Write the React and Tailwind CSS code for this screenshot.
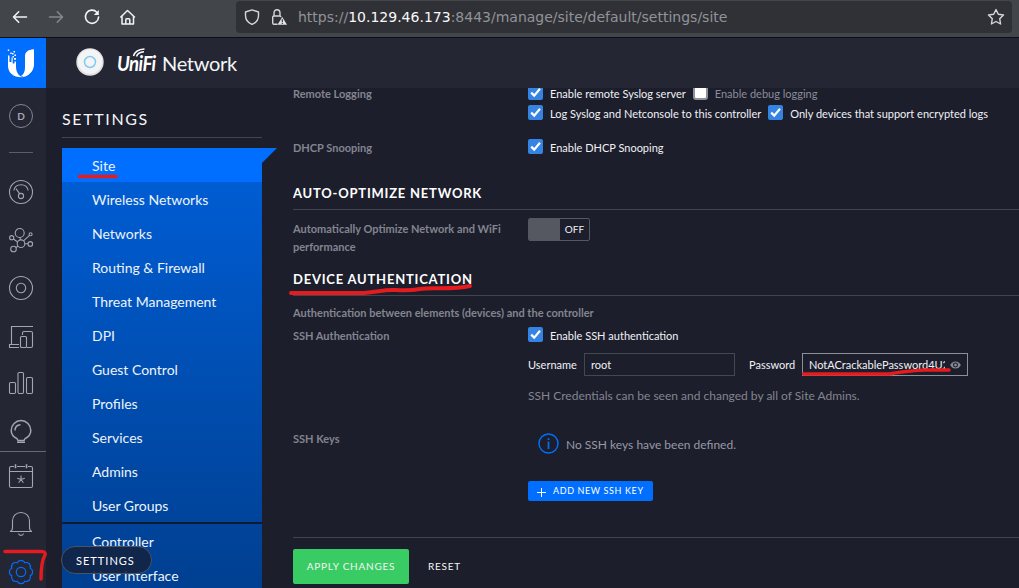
import React from "react";

function Check({ on = true }) {
  return on ? (
    <svg className="size-[15px] shrink-0" viewBox="0 0 15 15">
      <rect width="15" height="15" rx="2" fill="#3584e4" />
      <path d="M3.2 7.6 6.2 10.6 12 3.7" fill="none" stroke="#fff" strokeWidth="2.2" />
    </svg>
  ) : (
    <span className="size-[15px] shrink-0 rounded-[3px] border-2 border-[#8f8f9d] bg-white" />
  );
}

function Option({ on = true, children, className = "" }) {
  return (
    <label className={"flex items-start gap-[7px] " + className}>
      <Check on={on} />
      <span className={"mt-px whitespace-nowrap leading-4 " + (on ? "text-[#f0f1f4]" : "text-[#8b8d98]")}>{children}</span>
    </label>
  );
}

function Heading({ children }) {
  return (
    <h2 className="h-[26px] shrink-0 border-b border-[#42454f] text-[13px] font-bold leading-[18px] tracking-[0.78px] text-white">
      {children}
    </h2>
  );
}

function Label({ children }) {
  return <div className="w-[235px] shrink-0 pr-5 font-bold leading-[18px] text-[#83858f]">{children}</div>;
}

function Glyph({ children, blue, className = "" }) {
  return (
    <svg
      className={"size-6 shrink-0 overflow-visible " + className}
      viewBox="0 0 24 24"
      fill="none"
      stroke={blue ? "#006fff" : "#a3a5b0"}
      strokeWidth="1.1"
    >
      {children}
    </svg>
  );
}

function BrowserBar() {
  return (
    <div className="flex h-[38px] shrink-0 items-start border-b border-[#0d0d12] bg-[#42454a]">
      <div className="flex w-[236px] gap-3 pl-2 pt-[5px]">
        <svg className="size-6" viewBox="0 0 24 24" fill="none" stroke="#f3f3f4" strokeWidth="1.6" strokeLinecap="round" strokeLinejoin="round">
          <path d="M18.5 12H5.5M10.7 6.8 5.5 12l5.2 5.2" />
        </svg>
        <svg className="size-6" viewBox="0 0 24 24" fill="none" stroke="#85878b" strokeWidth="1.6" strokeLinecap="round" strokeLinejoin="round">
          <path d="M5.5 12h13M13.3 6.8l5.2 5.2-5.2 5.2" />
        </svg>
        <svg className="size-6" viewBox="0 0 24 24" fill="none" stroke="#f3f3f4" strokeWidth="1.6" strokeLinecap="round">
          <path d="M16.800 7.200A6.600 6.600 0 1 0 18.600 12" />
          <path d="M18.800 5v5h-5z" fill="#f3f3f4" stroke="none" />
        </svg>
        <svg className="size-6" viewBox="0 0 24 24" fill="none" stroke="#f3f3f4" strokeWidth="1.5" strokeLinecap="round" strokeLinejoin="round">
          <path d="M4.800 12 11.500 5.500 18.500 12M6 11v8h11.500v-8M9.800 19v-4.200q0-1 1-1h2q1 0 1 1V19" />
        </svg>
      </div>
      <div className="mt-px flex h-8 w-[776px] items-center rounded-[4px] bg-[#303136] pl-2">
        <svg className="size-4" viewBox="0 0 16 16" fill="none" stroke="#d6d6d8" strokeWidth="1.4" strokeLinejoin="round">
          <path d="M8 .9 14.500 3v3.400C14.500 10.500 11.500 13.900 8 15.400 4.500 13.900 1.500 10.500 1.500 6.400V3Z" />
        </svg>
        <svg className="ml-[11px] size-4" viewBox="0 0 16 16" fill="none" stroke="#d6d6d8" strokeWidth="1.4">
          <path d="M6.500 15.300H3Q1.700 15.300 1.700 14V8.200Q1.700 7 3 7H8.500Q10 7 10 8.300M3 7V4.200Q3 .8 6 .8T9 4.200V7" />
          <path d="M11.300 8 16 15.800H6.500Z" fill="#e2e2e4" stroke="none" />
          <path d="M11.300 10.300v3M11.300 14v1" stroke="#303136" strokeWidth="1.100" />
        </svg>
        <span className="ml-[11px] w-[689px] shrink-0 font-['DejaVu_Sans'] text-[14px] leading-8 text-[#929398]">
          https://<span className="text-[#f9f9fa]">10.129.46.173</span>:8443/manage/site/default/settings/site
        </span>
        <svg className="size-[18px] shrink-0" viewBox="0 0 18 18" fill="none" stroke="#d6d6d8" strokeWidth="1.4" strokeLinejoin="round">
          <path d="M9 1.600 11.300 6.300 16.500 7 12.700 10.700 13.600 16 9 13.500 4.400 16 5.300 10.700 1.500 7 6.700 6.300Z" />
        </svg>
      </div>
    </div>
  );
}

function Rail() {
  return (
    <aside className="flex w-[46px] shrink-0 flex-col items-center bg-[#242634]">
      <div className="flex h-[50px] w-[46px] shrink-0 items-center bg-[#006fff] pl-[7px]">
        <svg className="h-[30px] w-[27px]" viewBox="0 0 27 30" fill="#fff">
          <path d="M27 1.200C20.500 1.700 18 4 18 8.500V19C18 23 17 26.500 13.500 28.300 20.500 28.600 26.500 24.500 27 17Z" />
          <path d="M9 13.500V18.500C9 23.500 11 27.500 15.500 29.200 6.500 29.500 1 25 1 17.500V7.500h1.500V14H4.500V9.500h1.200V15.500H7.500v-2Z" />
          <path d="M26.200 20.500Q22.500 28.500 14.800 29.200 18 26.300 21 25Z" />
          <path d="M.8 1.500h1.400v1.400H.8zM5 5h1.500v1.500H5zM6.500 3H8v1.500H6.500zM3.300 4.500h1.400V6H3.300zM7.300 6.500H9V8H7.300zM5.500 8h1.500v1.500H5.500zM7 10h2v1.800H7z" />
        </svg>
      </div>
      <div className="ml-[9px] mt-4 flex size-6 shrink-0 items-center justify-center self-start rounded-full border border-[#83858f] pt-px text-[10px] font-bold text-[#a5a7b1]">D</div>
      <div className="ml-[9px] mt-6 h-px w-6 shrink-0 self-start bg-[#5c5e69]" />
      <div className="ml-[9px] mt-[27px] flex flex-1 flex-col self-start">
        <Glyph>
          <circle cx="12" cy="12" r="11.500" />
          <path d="M4.800 10.500C5.500 7 8.500 4.700 12 4.700s6.500 2.300 7.200 5.800M7 8.700 10.600 13.600" />
          <circle cx="12" cy="16" r="2.600" />
        </Glyph>
        <Glyph className="mt-6">
          <circle cx="10.700" cy="5" r="4.500" />
          <circle cx="12" cy="15.700" r="3.800" />
          <circle cx="2.700" cy="9.700" r="2.100" />
          <circle cx="21.300" cy="15.900" r="2.300" />
          <circle cx="4.500" cy="21" r="2.800" />
          <circle cx="21.600" cy="6.300" r="1.500" />
          <path d="m11 9.500.5 2.400M4.400 11l4.300 3M15.800 15.700H19M9.200 18.200l-2.500 1.200M14.500 12.800l6-5.500" />
        </Glyph>
        <Glyph className="mt-6">
          <circle cx="12" cy="12" r="11.500" />
          <circle cx="12" cy="12" r="4.700" />
        </Glyph>
        <Glyph className="mt-6">
          <path d="M24 2.500H2.500v18M10 20.500H.5v3H10M13.500 11V9q0-1.500 1.500-1.500h7q1.500 0 1.500 1.500v13q0 1.500-1.500 1.500h-4" />
          <rect x="11.500" y="12.500" width="6" height="11" rx="1" />
        </Glyph>
        <Glyph className="mt-6">
          <rect x=".5" y="10.500" width="6" height="11" rx="1.200" />
          <rect x="9" y=".5" width="5.500" height="21" rx="1.200" />
          <rect x="17.500" y="5.500" width="6" height="16" rx="1.200" />
        </Glyph>
        <Glyph className="mt-6">
          <path strokeWidth="1.500" d="M8 18.700C4 16.500 2.200 14 2.200 10.400a9.800 9.800 0 0 1 19.600 0c0 3.600-1.800 6.100-5.800 8.300l-1 1.800H9Z" />
          <path strokeWidth="1.500" d="M8 22.300h8M6 10.500C6 7 8 4.900 11.500 4.700" />
        </Glyph>
      </div>
      <div className="h-[137px] w-full shrink-0 border-t border-[#666873] pl-[9px] pt-3">
        <Glyph>
          <path d="M5 2.500H2Q.5 2.500.5 4v18q0 1.500 1.500 1.500h20q1.500 0 1.500-1.500V4q0-1.500-1.500-1.500h-3M8 2.500h8M.5 7.500h23" />
          <path strokeWidth="1.600" d="M6.500.2v4M17.500.2v4" />
          <path d="M12 15.500v-4M12 15.500l3.800-1.200M12 15.500l2.400 3.300M12 15.500l-2.400 3.300M12 15.500l-3.800-1.200" />
        </Glyph>
        <Glyph className="mt-6">
          <path d="M1 19.500q2.500-.5 2.500-4V9C3.500 4 7 .5 12 .5S20.500 4 20.500 9v6.500q0 3.500 2.500 4ZM9.500 21.500C10 24 14 24 14.500 21.500" />
        </Glyph>
        <Glyph blue className="mt-6">
          <path
            strokeWidth="1.200"
            d="M8.170 2.760A4.270 4.270 0 0 1 15.830 2.760A4.270 4.270 0 0 1 21.240 8.170A4.270 4.270 0 0 1 21.240 15.830A4.270 4.270 0 0 1 15.830 21.240A4.270 4.270 0 0 1 8.170 21.240A4.270 4.270 0 0 1 2.760 15.830A4.270 4.270 0 0 1 2.760 8.170A4.270 4.270 0 0 1 8.170 2.760Z"
          />
          <circle cx="12" cy="12" r="4.700" strokeWidth="1.200" />
        </Glyph>
      </div>
    </aside>
  );
}

const sections = ["Wireless Networks", "Networks", "Routing & Firewall", "Threat Management", "DPI", "Guest Control", "Profiles", "Services", "Admins", "User Groups"];

function Sidebar() {
  return (
    <nav className="ml-4 w-[200px] shrink-0">
      <div className="h-[50px] border-b border-[#42454f] pt-[21px] text-[16px] leading-5 tracking-[1.63px] text-[#f4f5f6]">SETTINGS</div>
      <div className="mt-[10px] bg-linear-to-b from-[#005fd8] to-[#003f90] text-[14px] leading-[36px] text-[#eef3fa]">
        <div className="relative h-[34px] bg-[#006fff] pl-[30px]">
          Site
          <svg className="absolute left-[200px] top-0 h-[15px] w-[15px]" viewBox="0 0 15 15"><path d="M0 0H15L0 15Z" fill="#006fff" /></svg>
        </div>
        {sections.map((s) => (
          <div key={s} className="h-[34px] pl-[30px]">{s}</div>
        ))}
        <div className="h-[2px] bg-[#101a30]" />
        <div className="h-[34px] pl-[30px]">Controller</div>
        <div className="h-[34px] pl-[30px]">User Interface</div>
      </div>
    </nav>
  );
}

function Content() {
  return (
    <main className="ml-[31px] flex h-[500px] flex-1 flex-col overflow-hidden text-[11px]">
      <div className="-mt-[3px] flex h-[54px] shrink-0">
        <Label>Remote Logging</Label>
        <div>
          <div className="flex h-5 gap-[7px]">
            <Option>Enable remote Syslog server</Option>
            <Option on={false}>Enable debug logging</Option>
          </div>
          <div className="flex gap-[7px]">
            <Option>Log Syslog and Netconsole to this controller</Option>
            <Option>Only devices that support encrypted logs</Option>
          </div>
        </div>
      </div>
      <div className="flex h-[45px] shrink-0">
        <Label>DHCP Snooping</Label>
        <Option>Enable DHCP Snooping</Option>
      </div>
      <Heading>AUTO-OPTIMIZE NETWORK</Heading>
      <div className="flex h-[60px] shrink-0 pt-[10px]">
        <Label>Automatically Optimize Network and WiFi performance</Label>
        <div className="-mt-[2px] flex h-[23px] w-[62px] overflow-hidden rounded-[2px] border border-[#555860]">
          <span className="w-[31px] bg-[#555860]" />
          <span className="flex-1 text-center text-[10px] leading-[20px] tracking-[0.1px] text-[#f0f1f4]">OFF</span>
        </div>
      </div>
      <Heading>DEVICE AUTHENTICATION</Heading>
      <div className="h-[31px] shrink-0 pt-2 font-bold leading-[18px] text-[#83858f]">
        Authentication between elements (devices) and the controller
      </div>
      <div className="flex h-[103px] shrink-0">
        <Label>SSH Authentication</Label>
        <div className="text-[#f0f1f4]">
          <Option>Enable SSH authentication</Option>
          <div className="mt-[9px] flex items-center">
            <span className="mt-[2px] w-14">Username</span>
            <div className="h-[23px] w-[151px] border border-[#42484f] pl-[6px] leading-[22px]">root</div>
            <span className="ml-[14px] mt-[2px] w-[53px]">Password</span>
            <div className="flex h-[23px] w-[166px] items-center border border-[#8c8f96] pl-[6px] leading-[21px]">
              <span className="w-[136px] overflow-hidden whitespace-nowrap">NotACrackablePassword4U2022</span>
              <svg className="ml-[5px] h-[8px] w-[11px]" viewBox="0 0 12 9" fill="#858892">
                <path fillRule="evenodd" d="M0 4.500Q2 .5 6 .5T12 4.500Q10 8.500 6 8.500T0 4.500M6 1.700a2.800 2.800 0 1 0 0 5.600 2.800 2.800 0 0 0 0-5.600" />
                <circle cx="6" cy="4.500" r="1.600" />
              </svg>
            </div>
          </div>
          <p className="mt-3 text-[12px] leading-4 text-[#83858f]">SSH Credentials can be seen and changed by all of Site Admins.</p>
        </div>
      </div>
      <div className="flex h-[107px] shrink-0">
        <Label>SSH Keys</Label>
        <div className="pt-[3px]">
          <div className="ml-[10px] flex h-[21px] items-center gap-[7px] text-[12px] text-[#979aa5]">
            <svg className="size-[21px]" viewBox="0 0 21 21" fill="none" stroke="#006fff">
              <circle cx="10.500" cy="10.500" r="9.500" strokeWidth="1.400" />
              <path d="M10.500 8.500V16M10.500 5.200V7" strokeWidth="1.700" />
            </svg>
            <span className="mt-[2px] whitespace-nowrap">No SSH keys have been defined.</span>
          </div>
          <button className="mt-[27px] flex h-5 w-[125px] items-center whitespace-nowrap rounded-[2px] bg-[#006fff] pl-[9px] text-[9px] tracking-[0.62px] text-white">
            <svg className="mr-[7px] mt-[3px] size-[9px]" viewBox="0 0 9 9" stroke="#fff"><path d="M4.500 0v9M0 4.500h9" /></svg>
            ADD NEW SSH KEY
          </button>
        </div>
      </div>
      <div className="flex h-[51px] shrink-0 border-t border-[#42454f] pt-[11px] text-[10px] tracking-[0.75px] text-[#f4f5f6]">
        <button className="h-[35px] w-[116px] rounded-[2px] bg-[#39cc64]">APPLY CHANGES</button>
        <span className="ml-[19px] leading-[35px]">RESET</span>
      </div>
    </main>
  );
}

export default function App() {
  return (
    <div className="relative flex h-[588px] w-[1019px] flex-col overflow-hidden bg-[#1c1e2c] font-['Lato',sans-serif]">
      <BrowserBar />
      <div className="flex h-[550px]">
        <Rail />
        <div className="flex min-w-0 flex-1 flex-col">
          <header className="flex h-[50px] shrink-0 items-start bg-[#242634] pl-[30px] pt-[10px]">
            <svg className="size-7" viewBox="0 0 28 28">
              <circle cx="14" cy="14" r="13.700" fill="#dfdfe3" />
              <circle cx="14" cy="13.500" r="12.200" fill="#f4f4f5" />
              <circle cx="14" cy="14" r="5.500" fill="none" stroke="#7fcaf8" strokeWidth="1.500" />
            </svg>
            <div className="relative ml-[13px] h-7 w-[40px]">
              <span className="block origin-left scale-x-[0.93] pt-[3px] text-[20px] font-bold italic leading-6 tracking-[-0.6px] text-white">UniFi</span>
              <svg className="absolute left-4 top-0 size-[13px] overflow-visible" viewBox="0 0 13 13" fill="none" stroke="#fff" strokeWidth="1.500">
                <path d="M.5 8Q2 1.500 11.500.9M3.500 8.500Q5 4.300 11 3.800" />
              </svg>
            </div>
            <span className="ml-[5px] mt-[3px] text-[20px] leading-6 tracking-[-0.3px] text-[#f4f5f6]">Network</span>
          </header>
          <div className="flex h-[500px]">
            <Sidebar />
            <Content />
          </div>
        </div>
      </div>
      <div className="absolute left-[61px] top-[546px] h-7 w-[91px] rounded-full border border-[#4b5260] bg-[#132442]/90 pl-[14px] text-[11px] leading-[28px] tracking-[1px] text-white">SETTINGS</div>
      <svg className="pointer-events-none absolute inset-0" width="1019" height="588" fill="none" stroke="#e41b1f" strokeWidth="3.500" strokeLinecap="round" strokeLinejoin="round">
        <path d="M79.500 176.500H116" />
        <path d="M291 293H364C378 292 384 289.500 394 290S410 291 420 289 452 290 470 286" strokeWidth="4" />
        <path d="M803.500 374H889C905 371 915 370.500 925 370H949" />
        <path d="M5 551.500H40Q46 551 45 555 41 562 41 579" />
      </svg>
    </div>
  );
}
